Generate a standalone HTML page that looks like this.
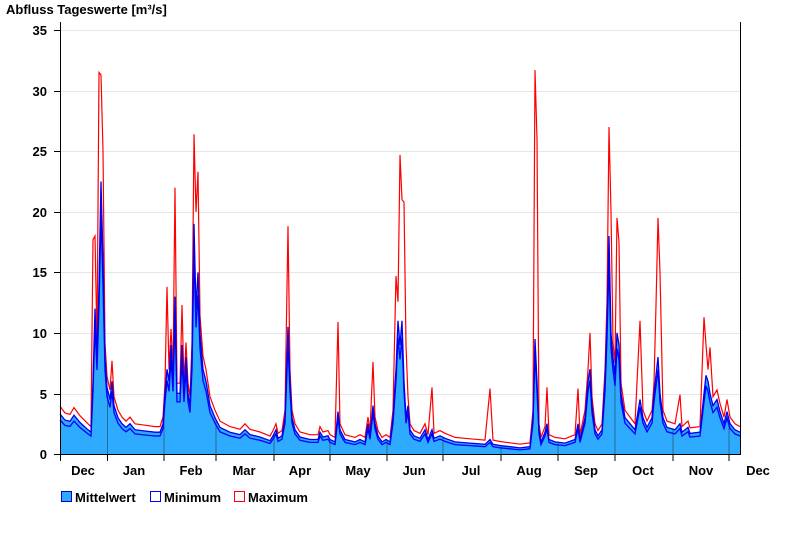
<!DOCTYPE html>
<html><head><meta charset="utf-8"><style>
html,body{margin:0;padding:0;background:#fff;width:800px;height:550px;overflow:hidden}
svg text{font-family:"Liberation Sans",sans-serif;font-weight:bold;fill:#000}
</style></head><body>
<svg id="s" width="800" height="550" xmlns="http://www.w3.org/2000/svg">
<defs><clipPath id="cp"><polygon id="cpoly" points="0,0"/></clipPath></defs>
<text x="6" y="14" font-size="13">Abfluss Tageswerte [m³/s]</text>
<g stroke="#e6e6e6" stroke-width="1">
<line x1="60" x2="740" y1="30.5" y2="30.5"/><line x1="60" x2="740" y1="91.5" y2="91.5"/>
<line x1="60" x2="740" y1="151.5" y2="151.5"/><line x1="60" x2="740" y1="212.5" y2="212.5"/>
<line x1="60" x2="740" y1="272.5" y2="272.5"/><line x1="60" x2="740" y1="333.5" y2="333.5"/>
<line x1="60" x2="740" y1="394.5" y2="394.5"/>
</g>
<g id="data"></g>
<g stroke="#000" stroke-width="1">
<line x1="60.5" y1="22" x2="60.5" y2="454"/><line x1="740.5" y1="22" x2="740.5" y2="454"/>
<line x1="60" y1="454.5" x2="741" y2="454.5"/>
<line x1="54" x2="60" y1="30.5" y2="30.5"/><line x1="54" x2="60" y1="91.5" y2="91.5"/>
<line x1="54" x2="60" y1="151.5" y2="151.5"/><line x1="54" x2="60" y1="212.5" y2="212.5"/>
<line x1="54" x2="60" y1="272.5" y2="272.5"/><line x1="54" x2="60" y1="333.5" y2="333.5"/>
<line x1="54" x2="60" y1="394.5" y2="394.5"/><line x1="54" x2="60" y1="454.5" y2="454.5"/>
</g>
<g font-size="13" text-anchor="end">
<text x="47" y="35">35</text><text x="47" y="96">30</text><text x="47" y="156">25</text>
<text x="47" y="217">20</text><text x="47" y="277">15</text><text x="47" y="338">10</text>
<text x="47" y="399">5</text><text x="47" y="459">0</text>
</g>
<g id="ticks" stroke="#000"></g>
<g font-size="13" text-anchor="middle">
<text x="83" y="475">Dec</text><text x="134" y="475">Jan</text><text x="191" y="475">Feb</text>
<text x="244" y="475">Mar</text><text x="300" y="475">Apr</text><text x="358" y="475">May</text>
<text x="414" y="475">Jun</text><text x="471" y="475">Jul</text><text x="529" y="475">Aug</text>
<text x="586" y="475">Sep</text><text x="643" y="475">Oct</text><text x="701" y="475">Nov</text>
<text x="758" y="475">Dec</text>
</g>
<rect x="61.5" y="491.5" width="10" height="10" fill="#2eaaff" stroke="#0000cc"/>
<text x="75" y="502" font-size="13">Mittelwert</text>
<rect x="150.5" y="491.5" width="10" height="10" fill="#fff" stroke="#0000ff"/>
<text x="164" y="502" font-size="13">Minimum</text>
<rect x="234.5" y="491.5" width="10" height="10" fill="#fff" stroke="#ff0000"/>
<text x="248" y="502" font-size="13">Maximum</text>
</svg>
<script>
var m=[60,3.3,65,2.8,70,2.7,74,3.2,80,2.6,88,2.0,91,1.8,93,6,95,12,97,8,99,14,101,22.5,103,16,105,8,107,5.5,110,4.5,112,6,114,4,118,3,122,2.5,126,2.2,130,2.5,135,2.0,145,1.9,155,1.8,160,1.8,163,2.5,165,5,167,7,169,6,171,9,173,6,175,13,177,5,180,5,182,9,184,5,186,8,188,5,190,4,192,8,194,19,196,12,198,15,200,10,203,7,206,6,210,4,215,3,220,2.2,230,1.8,240,1.6,245,2.0,250,1.6,260,1.4,270,1.1,273,1.5,276,2.0,278,1.3,282,1.5,285,3,288,10.5,290,6,292,3,295,2,300,1.4,310,1.2,318,1.2,320,1.8,323,1.4,328,1.5,330,1.2,335,1.0,338,3.5,340,2,345,1.2,355,1.0,360,1.2,365,1.0,368,2.5,370,1.5,373,4,375,2.5,378,1.5,382,1.0,386,1.2,390,1.0,393,3,396,7,398,11,400,9,402,11,404,6,406,3,408,4,410,2,414,1.5,420,1.3,425,2,428,1.2,432,2,434,1.3,440,1.5,445,1.3,455,1.0,470,0.9,485,0.8,490,1.2,493,0.8,500,0.7,510,0.6,520,0.5,530,0.6,533,3,535,9.5,537,6,539,2,541,1,545,1.8,547,2.5,549,1.2,555,1.0,565,0.9,575,1.2,578,2.5,580,1.2,585,3,588,6,590,7,592,4,595,2,598,1.5,602,2,605,6,607,11,609,18,611,10,613,8,615,6.5,617,10,619,9,621,5,625,3,630,2.5,635,2.0,640,4.5,643,3,647,2.2,652,3,654,5,656,6.5,658,8,660,5,663,3,667,2.2,675,2.0,680,2.5,682,1.8,688,2.2,690,1.7,700,1.8,704,5,706,6.5,708,6,710,5,713,4,717,4.5,720,3.5,724,2.5,727,3.5,730,2.5,735,2.0,740,1.8];
var pk={93:17.7,95:18,99:31.5,101:31.3,103:25,112:7.7,167:13.8,175:22,182:12.3,194:26.4,196:20,198:23.3,288:18.8,338:10.9,373:7.6,396:14.7,400:24.7,402:21,404:20.8,406:9,432:5.5,490:5.4,535:31.7,537:26,547:5.5,578:5.4,590:10,609:27,611:20,617:19.5,619:17.5,640:11,656:12.3,658:19.5,660:15,680:4.9,704:11.3,706:9,710:8.8,727:4.5};
function Y(v){return (454-v*12.11).toFixed(1)}
var mean=[],mn=[],mx=[];
for(var i=0;i<m.length;i+=2){var x=m[i],v=m[i+1];
mean.push(x+","+Y(v));mn.push(x+","+Y(Math.max(0,v*0.88-0.1)));
mx.push(x+","+Y(pk[x]!==undefined?pk[x]:v*1.12+0.25));}
var ns="http://www.w3.org/2000/svg",g=document.getElementById("data");
function el(t,a){var e=document.createElementNS(ns,t);for(var k in a)e.setAttribute(k,a[k]);g.appendChild(e);return e}
var poly="60,454 "+mean.join(" ")+" 740,454";
document.getElementById("cpoly").setAttribute("points",poly);
el("polygon",{points:poly,fill:"#2eaaff",stroke:"none"});
[107.5,164,216,274,330,387,443,501,558,615,673,729].forEach(function(x){el("line",{x1:x,x2:x,y1:22,y2:454,stroke:"#2a6a8a","stroke-width":1,"clip-path":"url(#cp)"})});
el("polyline",{points:mx.join(" "),fill:"none",stroke:"#ff0000","stroke-width":1.2});
el("polyline",{points:mn.join(" "),fill:"none",stroke:"#0000ff","stroke-width":1.3});
el("polyline",{points:mean.join(" "),fill:"none",stroke:"#0000ee","stroke-width":1.3});
var t=document.getElementById("ticks");
[60.5,107.5,164,216,274,330,387,443,501,558,615,673,729].forEach(function(x){var e=document.createElementNS(ns,"line");e.setAttribute("x1",x);e.setAttribute("x2",x);e.setAttribute("y1",454);e.setAttribute("y2",461);t.appendChild(e)});
</script>
</body></html>
